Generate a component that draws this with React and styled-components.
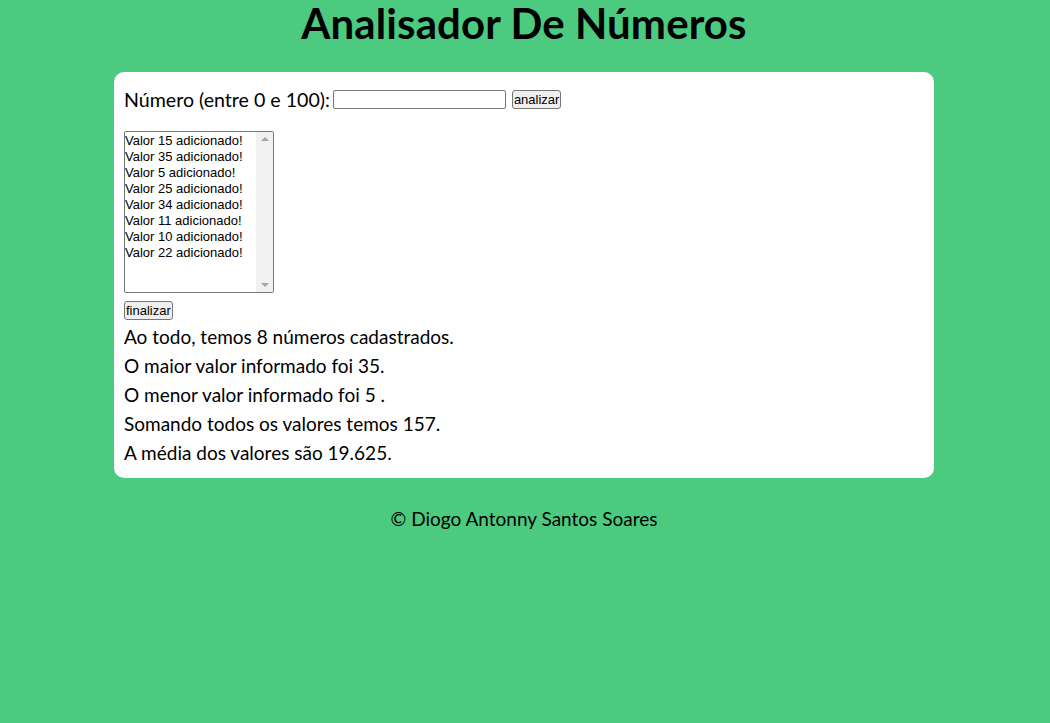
import React from "react";
import styled, { createGlobalStyle } from "styled-components";

const Global = createGlobalStyle`
  html, body { margin: 0; padding: 0; }
  body {
    background: #4ccb80;
    font-family: Lato, "Noto Sans", sans-serif;
    color: #000;
  }
`;

const Page = styled.div`
  padding: 0 10px 8px 8px;
`;

const Title = styled.h1`
  margin: 0;
  height: 72px;
  line-height: 47px;
  text-align: center;
  font-size: 42px;
  font-weight: 700;
  letter-spacing: 0.1px;
`;

const Card = styled.section`
  width: 820px;
  box-sizing: border-box;
  margin: 0 auto;
  background: #fff;
  border-radius: 10px;
  padding: 14px 10px 11px;
`;

const Row = styled.div`
  display: flex;
  align-items: center;
  gap: 3px;
  height: 26px;
`;

const Label = styled.label`
  font-size: 19.6px;
`;

const TextInput = styled.input`
  width: 173px;
  height: 19px;
  box-sizing: border-box;
  border: 1px solid #767676;
  border-radius: 2px;
  padding: 1px 2px;
  margin: 0;
  font: 13px "Liberation Sans", Arial, sans-serif;
  background: #fff;
`;

const Button = styled.button`
  height: 19px;
  box-sizing: border-box;
  border: 1px solid #767676;
  border-radius: 3px;
  background: #efefef;
  padding: 0 1px;
  margin: 0 0 0 ${(p) => p.$ml || 0}px;
  font: 13px "Liberation Sans", Arial, sans-serif;
  color: #000;
  line-height: 17px;
`;

const ListBox = styled.div`
  margin-top: 19px;
  width: 150px;
  height: 162px;
  box-sizing: border-box;
  border: 1px solid #767676;
  border-radius: 2px;
  display: flex;
  overflow: hidden;
  background: #fff;
`;

const Items = styled.ul`
  flex: 1;
  list-style: none;
  margin: 0;
  padding: 1px 0 0;
  font: 13px "Liberation Sans", Arial, sans-serif;
`;

const Item = styled.li`
  height: 16px;
  line-height: 16px;
  white-space: nowrap;
`;

const ScrollTrack = styled.div`
  width: 17px;
  background: #f1f1f1;
  display: flex;
  flex-direction: column;
  justify-content: space-between;
  align-items: center;
  padding: 5px 0;
`;

const Arrow = styled.span`
  width: 0;
  height: 0;
  border-left: 4px solid transparent;
  border-right: 4px solid transparent;
  ${(p) =>
    p.$down
      ? "border-top: 4px solid #a3a3a3;"
      : "border-bottom: 4px solid #a3a3a3;"}
`;

const FinishWrap = styled.div`
  margin-top: 6px;
  height: 19px;
`;

const Results = styled.div`
  margin-top: 4px;
`;

const Line = styled.p`
  margin: 0;
  font-size: 19px;
  line-height: 29px;
`;

const Footer = styled.footer`
  text-align: center;
  font-size: 19px;
  line-height: 24px;
  margin-top: 29px;
`;

const values = [15, 35, 5, 25, 34, 11, 10, 22];

export default function App() {
  const sum = values.reduce((a, b) => a + b, 0);
  return (
    <>
      <Global />
      <Page>
        <Title>Analisador De Números</Title>
        <Card>
          <Row>
            <Label htmlFor="num">Número (entre 0 e 100):</Label>
            <TextInput id="num" type="text" />
            <Button $ml={3}>analizar</Button>
          </Row>
          <ListBox>
            <Items>
              {values.map((v, i) => (
                <Item key={i}>Valor {v} adicionado!</Item>
              ))}
            </Items>
            <ScrollTrack>
              <Arrow />
              <Arrow $down />
            </ScrollTrack>
          </ListBox>
          <FinishWrap>
            <Button>finalizar</Button>
          </FinishWrap>
          <Results>
            <Line>Ao todo, temos {values.length} números cadastrados.</Line>
            <Line>O maior valor informado foi {Math.max(...values)}.</Line>
            <Line>O menor valor informado foi {Math.min(...values)} .</Line>
            <Line>Somando todos os valores temos {sum}.</Line>
            <Line>A média dos valores são {sum / values.length}.</Line>
          </Results>
        </Card>
        <Footer>© Diogo Antonny Santos Soares</Footer>
      </Page>
    </>
  );
}
